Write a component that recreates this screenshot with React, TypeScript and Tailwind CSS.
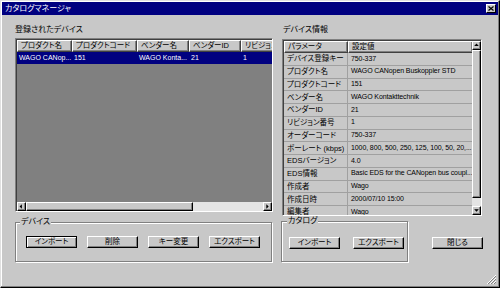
import React from 'react';

const devices = [
  { name: 'WAGO CANop...', code: '151', vendor: 'WAGO Konta...', vid: '21', rev: '1' },
];

const info = [
  ['デバイス登録キー', '750-337'],
  ['プロダクト名', 'WAGO CANopen Buskoppler STD'],
  ['プロダクトコード', '151'],
  ['ベンダー名', 'WAGO Kontakttechnik'],
  ['ベンダーID', '21'],
  ['リビジョン番号', '1'],
  ['オーダーコード', '750-337'],
  ['ボーレート (kbps)', '1000, 800, 500, 250, 125, 100, 50, 20,...'],
  ['EDSバージョン', '4.0'],
  ['EDS情報', 'Basic EDS for the CANopen bus coupl...'],
  ['作成者', 'Wago'],
  ['作成日時', '2000/07/10 15:00'],
  ['編集者', 'Wago'],
];

const Arrow = ({ dir }: { dir: 'up' | 'down' | 'left' | 'right' }) => {
  const pts = {
    up: '1.5,5 4.5,2 7.5,5',
    down: '1.5,3 4.5,6 7.5,3',
    left: '5,1.5 2,4.5 5,7.5',
    right: '3,1.5 6,4.5 3,7.5',
  }[dir];
  return (
    <div className="w-[9px] h-[9px] shrink-0 bg-[#c8c8c8] border border-t-white border-l-white border-r-black border-b-black shadow-[inset_-1px_-1px_0_#808080] flex items-center justify-center">
      <svg width="7" height="7" viewBox="0 0 9 9">
        <polygon points={pts} fill="black" />
      </svg>
    </div>
  );
};

const Button = ({ label, main = false }: { label: string; main?: boolean }) => (
  <div
    className={`w-[51px] h-[12px] flex items-center justify-center text-[7.5px] leading-none bg-[#c8c8c8] border ${
      main
        ? 'border-black shadow-[inset_1px_1px_0_white,inset_-1px_-1px_0_#808080]'
        : 'border-t-white border-l-white border-r-black border-b-black shadow-[inset_-1px_-1px_0_#808080]'
    }`}
  >
    {label}
  </div>
);

const HeaderCell = ({ label, w }: { label: string; w: string }) => (
  <div
    className={`${w} h-full shrink-0 overflow-hidden whitespace-nowrap pl-[3px] flex items-center bg-[#c8c8c8] border border-t-white border-l-white border-r-[#404040] border-b-[#404040] shadow-[inset_-1px_-1px_0_#808080]`}
  >
    {label}
  </div>
);

export default function App() {
  return (
    <div className="w-[500px] h-[288px] bg-[#c8c8c8] text-black text-[7.5px] font-['Liberation_Sans','Noto_Sans_CJK_JP',sans-serif] [font-feature-settings:'palt'] border border-t-[#e0e0e0] border-l-[#e0e0e0] border-r-black border-b-black shadow-[inset_-1px_-1px_0_#808080,inset_1px_1px_0_white] relative overflow-hidden">
      {/* title bar */}
      <div className="mx-[1px] mt-[1px] h-[13px] bg-[#000080] flex items-center justify-between pl-[3px] pr-[2px]">
        <span className="text-white text-[8px] leading-none">カタログマネージャ</span>
        <div className="w-[10px] h-[9px] bg-[#c8c8c8] border border-t-white border-l-white border-r-black border-b-black flex items-center justify-center">
          <svg width="6" height="5" viewBox="0 0 6 5">
            <path d="M0.5 0.5 L5.5 4.5 M5.5 0.5 L0.5 4.5" stroke="black" strokeWidth="1.2" />
          </svg>
        </div>
      </div>

      <div className="flex pl-[14px] h-[201px]">
        {/* registered devices */}
        <div className="w-[258px] flex flex-col">
          <div className="mt-[10px] h-[10px] leading-[10px] text-[8px]">登録されたデバイス</div>
          <div className="mt-[3px] h-[174px] flex flex-col border border-t-[#808080] border-l-[#808080] border-r-white border-b-white shadow-[inset_1px_1px_0_#404040] p-[1px] pr-0 pb-0">
            <div className="h-[12px] flex overflow-hidden shrink-0">
              <HeaderCell w="w-[55px]" label="プロダクト名" />
              <HeaderCell w="w-[65px]" label="プロダクトコード" />
              <HeaderCell w="w-[52px]" label="ベンダー名" />
              <HeaderCell w="w-[52px]" label="ベンダーID" />
              <HeaderCell w="w-[60px]" label="リビジョン番号" />
            </div>
            {devices.map((d) => (
              <div key={d.name} className="h-[12px] flex bg-[#000080] text-white text-[7px] shrink-0 overflow-hidden whitespace-nowrap">
                <div className="w-[55px] shrink-0 pl-[2px] flex items-center overflow-hidden">{d.name}</div>
                <div className="w-[65px] shrink-0 pl-[2px] flex items-center overflow-hidden">{d.code}</div>
                <div className="w-[52px] shrink-0 pl-[2px] flex items-center overflow-hidden">{d.vendor}</div>
                <div className="w-[52px] shrink-0 pl-[2px] flex items-center overflow-hidden">{d.vid}</div>
                <div className="w-[30px] shrink-0 pl-[2px] flex items-center overflow-hidden">{d.rev}</div>
              </div>
            ))}
            <div className="flex-1 bg-[#808080]" />
            <div className="h-[9px] flex shrink-0">
              <Arrow dir="left" />
              <div className="w-[167px] h-[9px] bg-[#c8c8c8] border border-t-white border-l-white border-r-black border-b-black shadow-[inset_-1px_-1px_0_#808080]" />
              <div className="flex-1 bg-[#e4e4e4]" />
              <Arrow dir="right" />
            </div>
          </div>
        </div>

        {/* device information */}
        <div className="ml-[9px] w-[200px] flex flex-col">
          <div className="mt-[10px] h-[10px] leading-[10px] text-[8px] pl-[1px]">デバイス情報</div>
          <div className="mt-[4px] h-[177px] flex border border-t-[#808080] border-l-[#808080] border-r-white border-b-white shadow-[inset_1px_1px_0_#404040] pl-[1px] pt-[1px]">
            <div className="flex-1 flex flex-col overflow-hidden">
              <div className="h-[12px] flex shrink-0">
                <HeaderCell w="w-[64px]" label="パラメータ" />
                <HeaderCell w="w-[125px]" label="設定値" />
              </div>
              {info.map(([k, v]) => (
                <div key={k} className="h-[12.75px] shrink-0 flex border-b border-[#a0a0a0] whitespace-nowrap">
                  <div className="w-[64px] shrink-0 pl-[3px] flex items-center border-r border-[#a0a0a0] overflow-hidden">{k}</div>
                  <div className="flex-1 pl-[3px] flex items-center overflow-hidden text-[7px] tracking-[-0.1px]">{v}</div>
                </div>
              ))}
            </div>
            <div className="w-[9px] flex flex-col shrink-0">
              <Arrow dir="up" />
              <div className="h-[148px] bg-[#c8c8c8] border border-t-white border-l-white border-r-black border-b-black shadow-[inset_-1px_-1px_0_#808080]" />
              <div className="flex-1 bg-[#e4e4e4]" />
              <Arrow dir="down" />
            </div>
          </div>
        </div>
      </div>

      {/* bottom groups */}
      <div className="flex pl-[14px] mt-[5px] items-start">
        <div className="relative w-[257px] h-[40px] mt-[1px] border border-[#808080] shadow-[inset_1px_1px_0_white,1px_1px_0_white] pl-[10px] pt-[13px] flex gap-[10px]">
          <span className="absolute left-[4px] top-[-6px] px-[1px] bg-[#c8c8c8] text-[8px] leading-[10px]">デバイス</span>
          <Button label="インポート" main />
          <Button label="削除" />
          <Button label="キー変更" />
          <Button label="エクスポート" />
        </div>
        <div className="relative ml-[9px] w-[127px] h-[41px] border border-[#808080] shadow-[inset_1px_1px_0_white,1px_1px_0_white] pl-[7px] pt-[15px] flex gap-[13px]">
          <span className="absolute left-[5px] top-[-6px] px-[1px] bg-[#c8c8c8] text-[8px] leading-[10px]">カタログ</span>
          <Button label="インポート" />
          <Button label="エクスポート" />
        </div>
        <div className="ml-[24px] mt-[16px]">
          <Button label="閉じる" />
        </div>
      </div>

      {/* size grip */}
      <svg className="absolute right-[2px] bottom-[2px]" width="11" height="11" viewBox="0 0 11 11">
        <path d="M10 1 L1 10 M10 4 L4 10 M10 7 L7 10" stroke="white" strokeWidth="1" />
        <path d="M10 2 L2 10 M10 5 L5 10 M10 8 L8 10" stroke="#808080" strokeWidth="1" />
      </svg>
    </div>
  );
}
